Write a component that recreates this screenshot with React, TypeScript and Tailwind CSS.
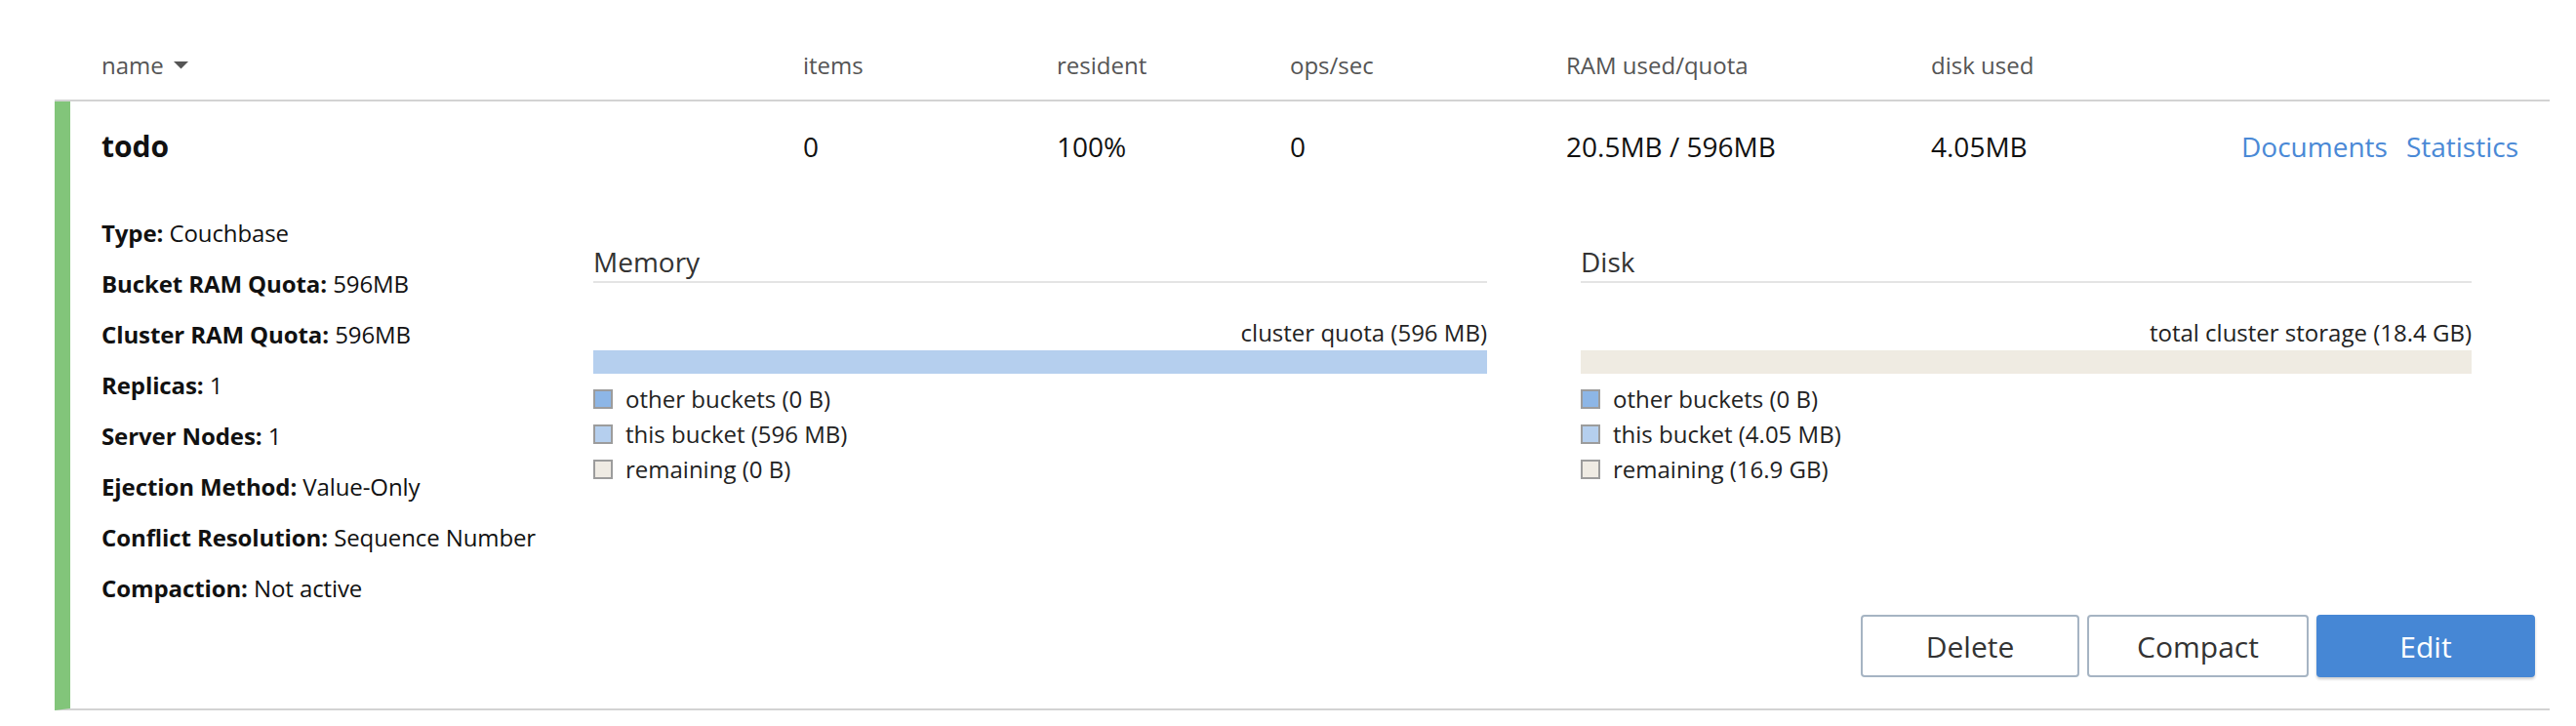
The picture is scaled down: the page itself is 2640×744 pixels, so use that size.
import React from "react";

const cols = "grid grid-cols-[719px_260px_239px_283px_374px_1fr] content-start items-start";

function Legend({ color, label }: { color: string; label: string }) {
  return (
    <div className="flex items-center h-[36px]">
      <span className={`w-[20px] h-[20px] border-2 border-[#9c9c9c] ${color}`} />
      <span className="ml-[13px] text-[24px] leading-[36px] text-[#222]">{label}</span>
    </div>
  );
}

function Panel({
  title,
  caption,
  barColor,
  items,
  width,
}: {
  title: string;
  caption: string;
  barColor: string;
  items: { color: string; label: string }[];
  width: string;
}) {
  return (
    <div className={`${width} flex flex-col`}>
      <div className="mt-[35px] text-[28px] leading-[40px] text-[#333] border-b-2 border-[#e4e4e4]">
        {title}
      </div>
      <div className="mt-[34px] text-right text-[24px] leading-[33px] text-[#222]">{caption}</div>
      <div className={`mt-[2px] h-[24px] ${barColor}`} />
      <div className="mt-[8px] flex flex-col">
        {items.map((it) => (
          <Legend key={it.label} color={it.color} label={it.label} />
        ))}
      </div>
    </div>
  );
}

const details: [string, string][] = [
  ["Type:", "Couchbase"],
  ["Bucket RAM Quota:", "596MB"],
  ["Cluster RAM Quota:", "596MB"],
  ["Replicas:", "1"],
  ["Server Nodes:", "1"],
  ["Ejection Method:", "Value-Only"],
  ["Conflict Resolution:", "Sequence Number"],
  ["Compaction:", "Not active"],
];

export default function App() {
  return (
    <div
      className="w-[2640px] h-[744px] bg-white pl-[56px] pr-[27px]"
      style={{ fontFamily: '"Open Sans", "Noto Sans", sans-serif' }}
    >
      {/* header */}
      <div className={`${cols} h-[104px] border-b-2 border-[#d3d3d3] pl-[48px] pt-[50px] text-[24px] leading-[33px] text-[#555]`}>
        <div className="flex items-center h-[33px]">
          <span>name</span>
          <svg className="ml-[10px]" width="15" height="8" viewBox="0 0 15 8">
            <path d="M0 0 L15 0 L7.5 7.5 Z" fill="#555" />
          </svg>
        </div>
        <div>items</div>
        <div>resident</div>
        <div>ops/sec</div>
        <div>RAM used/quota</div>
        <div>disk used</div>
      </div>

      {/* bucket row */}
      <div className="border-l-[16px] border-[#82c57a] border-b-2 border-b-[#d3d3d3] pl-[32px] pr-[15px] pb-[32px]">
        <div className={`${cols} pt-[26px] pr-[17px] text-[28px] leading-[40px] text-[#111]`}>
          <div className="text-[30px] font-bold">todo</div>
          <div>0</div>
          <div>100%</div>
          <div>0</div>
          <div>20.5MB / 596MB</div>
          <div className="flex justify-between">
            <span>4.05MB</span>
            <span className="flex gap-[19px] text-[#4a89d6]">
              <span>Documents</span>
              <span>Statistics</span>
            </span>
          </div>
        </div>

        <div className="flex mt-[43px]">
          <div className="w-[504px] flex flex-col">
            {details.map(([k, v]) => (
              <div key={k} className="text-[24px] leading-[52px] text-[#111] tracking-[-0.1px]">
                <span className="font-bold">{k}</span> {v}
              </div>
            ))}
          </div>
          <Panel
            width="w-[916px]"
            title="Memory"
            caption="cluster quota (596 MB)"
            barColor="bg-[#b5cfee]"
            items={[
              { color: "bg-[#8db6e6]", label: "other buckets (0 B)" },
              { color: "bg-[#b5cfee]", label: "this bucket (596 MB)" },
              { color: "bg-[#efebe3]", label: "remaining (0 B)" },
            ]}
          />
          <div className="w-[96px]" />
          <Panel
            width="w-[913px]"
            title="Disk"
            caption="total cluster storage (18.4 GB)"
            barColor="bg-[#efebe2]"
            items={[
              { color: "bg-[#8db6e6]", label: "other buckets (0 B)" },
              { color: "bg-[#b5cfee]", label: "this bucket (4.05 MB)" },
              { color: "bg-[#efebe3]", label: "remaining (16.9 GB)" },
            ]}
          />
        </div>

        <div className="flex justify-end gap-[8px] mt-[1px]">
          <button className="w-[224px] h-[64px] border-2 border-[#a6b4c3] rounded-[4px] bg-white text-[30px] text-[#333]">
            Delete
          </button>
          <button className="w-[227px] h-[64px] border-2 border-[#a6b4c3] rounded-[4px] bg-white text-[30px] text-[#333]">
            Compact
          </button>
          <button className="w-[224px] h-[64px] rounded-[4px] bg-[#4687d5] text-[30px] text-white shadow-[0_2px_3px_rgba(0,0,0,0.2)]">
            Edit
          </button>
        </div>
      </div>
    </div>
  );
}
